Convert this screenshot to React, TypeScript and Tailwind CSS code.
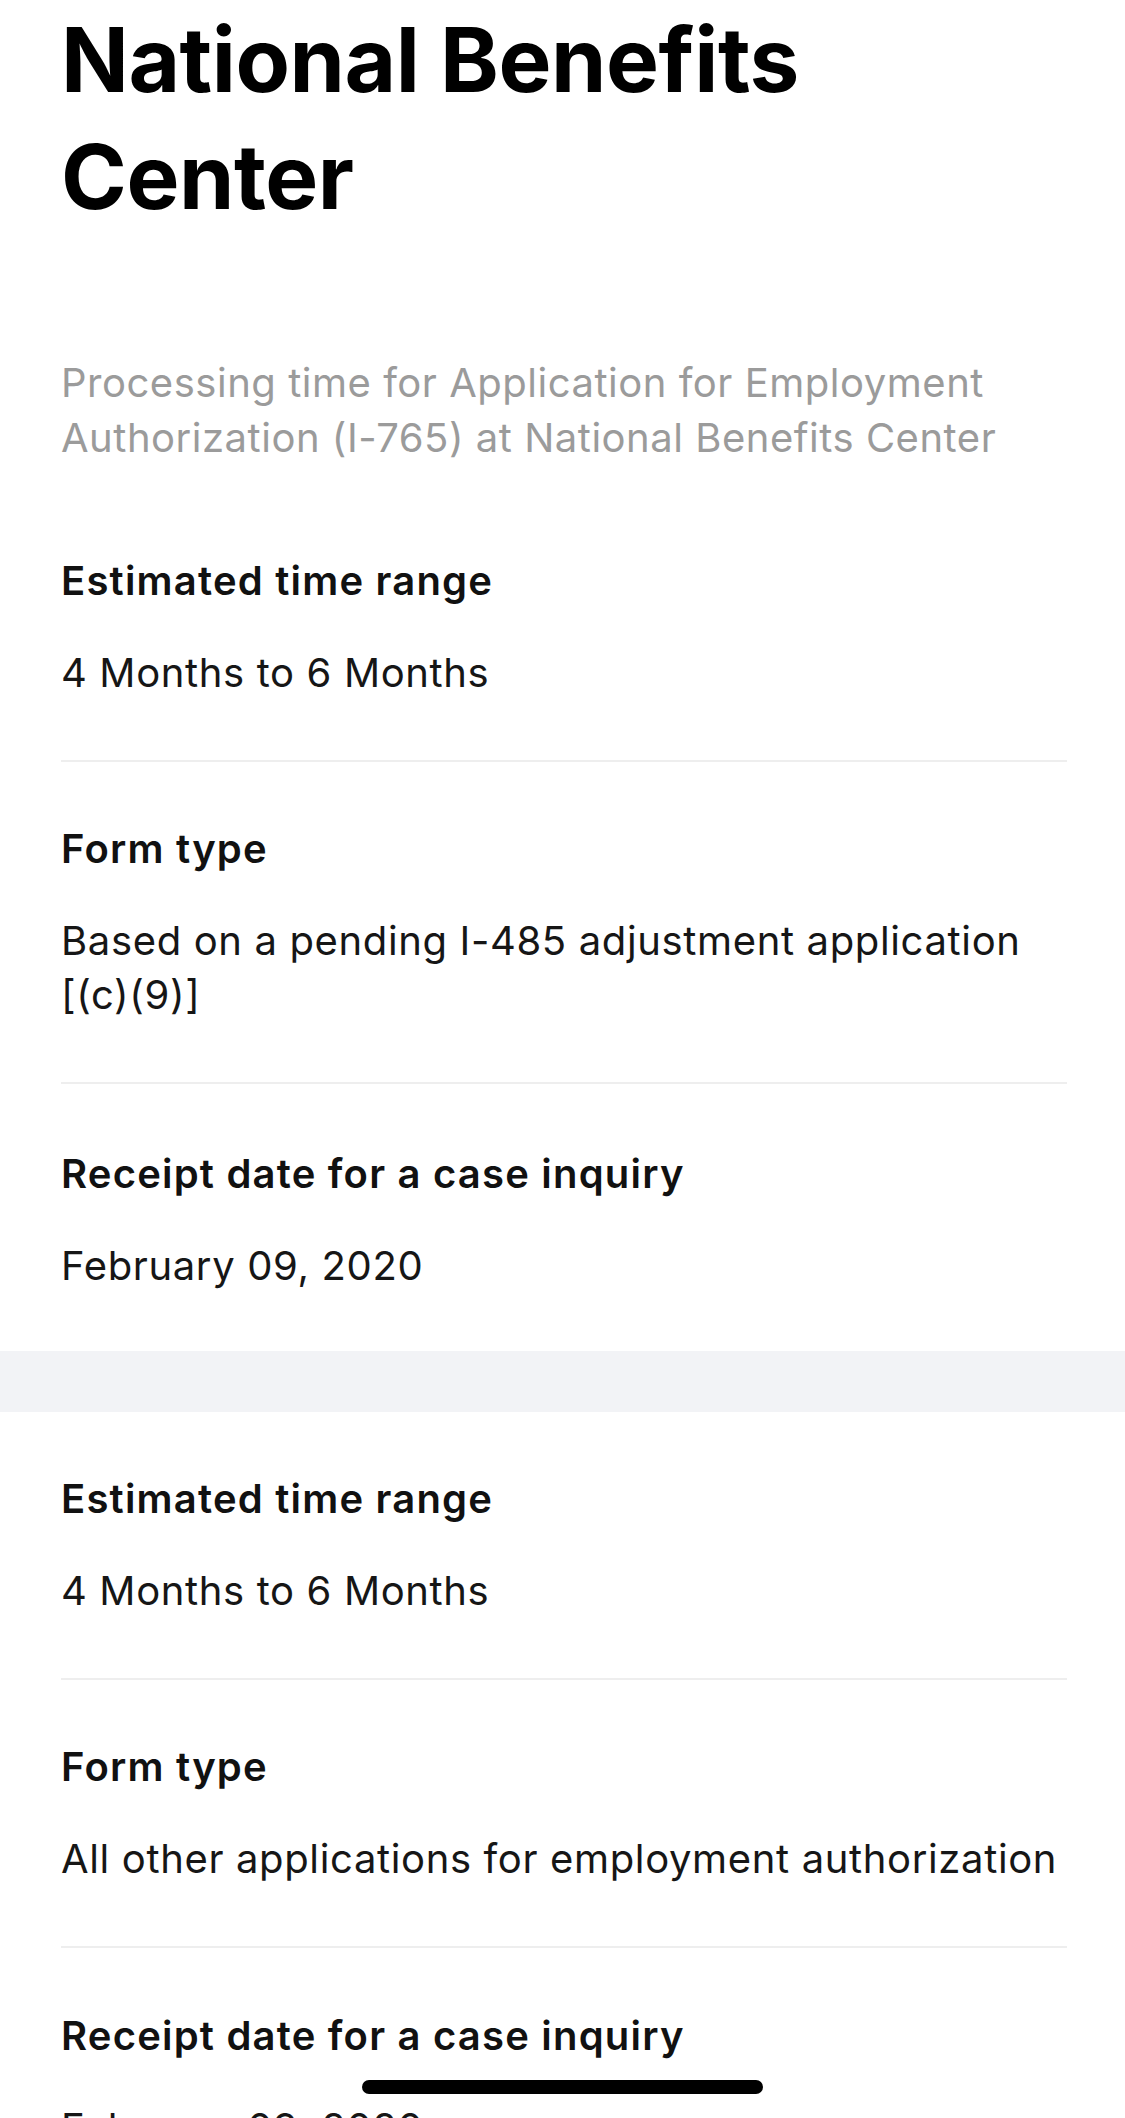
import React from "react";

type Row = { label: string; value: React.ReactNode };

const section1: Row[] = [
  { label: "Estimated time range", value: "4 Months to 6 Months" },
  {
    label: "Form type",
    value: (
      <>
        Based on a pending I-485 adjustment application{" "}
        <span className="whitespace-nowrap">[(c)(9)]</span>
      </>
    ),
  },
  { label: "Receipt date for a case inquiry", value: "February 09, 2020" },
];

const section2: Row[] = [
  { label: "Estimated time range", value: "4 Months to 6 Months" },
  { label: "Form type", value: "All other applications for employment authorization" },
  { label: "Receipt date for a case inquiry", value: "February 09, 2020" },
];

function Section({ rows, first }: { rows: Row[]; first?: boolean }) {
  return (
    <div className="pl-[61px] pr-[58px]">
      {rows.map((r, i) => {
        const last = i === rows.length - 1;
        return (
          <div
            key={i}
            className={
              !last
                ? "pt-[60px] pb-[60px] border-b-2 border-[#eeeeee]"
                : first
                ? "pt-[63px] pb-[58px]"
                : "pt-[61px] pb-[58px]"
            }
          >
            <div className="text-[40px] leading-[54px] font-semibold text-[#111111] tracking-[0.03em]">
              {r.label}
            </div>
            <div className="mt-[38px] text-[40px] leading-[54px] text-[#161616] tracking-[0.016em]">
              {r.value}
            </div>
          </div>
        );
      })}
    </div>
  );
}

export default function App() {
  return (
    <div
      className="relative w-[1125px] min-h-[2118px] bg-white overflow-hidden"
      style={{ fontFamily: "Inter, 'Noto Sans', sans-serif" }}
    >
      <div className="px-[61px] pt-[1px]">
        <h1 className="text-[89px] leading-[117px] font-bold text-black tracking-[-0.005em]">
          National Benefits
          <br />
          Center
        </h1>
        <p className="mt-[120px] text-[40px] leading-[55px] text-[#9b9b9b] tracking-[0.013em]">
          Processing time for Application for Employment
          <br />
          Authorization (I-765) at National Benefits Center
        </p>
      </div>
      <div className="mt-[29px]">
        <Section rows={section1} first />
      </div>
      <div className="h-[61px] bg-[#f2f3f6]" />
      <Section rows={section2} />
      <div className="fixed left-[362px] top-[2080px] w-[401px] h-[14px] rounded-full bg-black" />
    </div>
  );
}
